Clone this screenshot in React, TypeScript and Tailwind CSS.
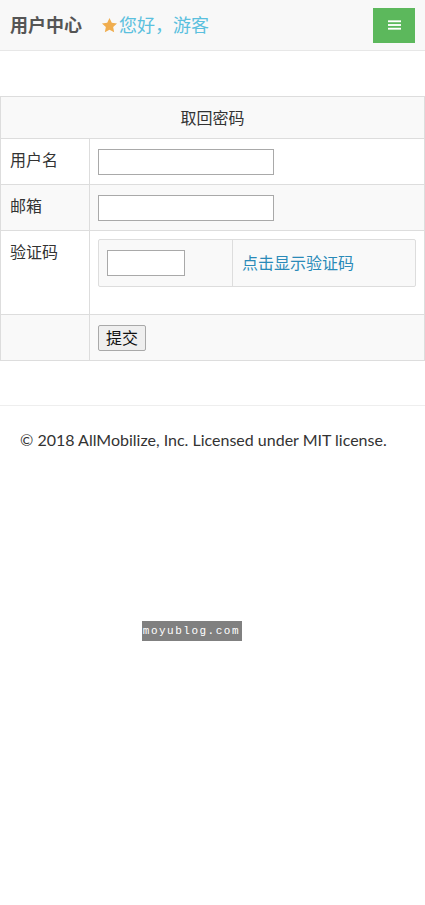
import React from "react";

const font = { fontFamily: '"Noto Sans", "Noto Sans CJK SC", sans-serif' };

function Header() {
    return (
        <div className="flex items-center h-[51px] bg-[#f8f8f8] border-b border-[#e7e7e7] pl-[10px] pr-[10px]">
            <span className="text-[18px] font-bold text-[#555]">用户中心</span>
            <span className="ml-[18px] flex items-center text-[18px] text-[#5bc0de]">
                <svg viewBox="0 0 24 24" className="w-[19px] h-[19px] fill-[#f0ad4e]">
                    <path d="M12 2.5l2.9 6.1 6.6.8-4.9 4.6 1.3 6.6L12 17.3l-5.9 3.3 1.3-6.6-4.9-4.6 6.6-.8z" />
                </svg>
                您好，游客
            </span>
            <button className="ml-auto w-[42px] h-[35px] bg-[#5cb85c] flex items-center justify-center">
                <svg viewBox="0 0 14 12" className="w-[13px] h-[12px] fill-white">
                    <rect x="0" y="1" width="14" height="2" />
                    <rect x="0" y="5" width="14" height="2" />
                    <rect x="0" y="9" width="14" height="2" />
                </svg>
            </button>
        </div>
    );
}

function Row({ label, bg, h, children }: { label: string; bg: string; h: string; children: React.ReactNode }) {
    return (
        <div className={`flex border-t border-[#ddd] ${bg} ${h}`}>
            <div className="w-[89px] shrink-0 border-r border-[#ddd] pl-[9px] pt-[9px] text-[16px] text-[#333]">{label}</div>
            <div className="flex-1 pl-[8px] pr-[8px] pt-[10px]">{children}</div>
        </div>
    );
}

export default function App() {
    return (
        <div className="bg-white min-h-[905px] text-[#333]" style={font}>
            <Header />
            <div className="mt-[45px] border border-[#ddd]">
                <div className="h-[41px] bg-[#f9f9f9] flex items-center justify-center text-[16px]">取回密码</div>
                <Row label="用户名" bg="bg-white" h="h-[46px]">
                    <input className="block w-[176px] h-[26px] border border-[#a9a9a9] bg-white" />
                </Row>
                <Row label="邮箱" bg="bg-[#f9f9f9]" h="h-[46px]">
                    <input className="block w-[176px] h-[26px] border border-[#a9a9a9] bg-white" />
                </Row>
                <Row label="验证码" bg="bg-white" h="h-[84px]">
                    <div className="-mt-[2px] flex h-[48px] border border-[#ddd] rounded-[2px] bg-[#f9f9f9]">
                        <div className="w-[134px] border-r border-[#ddd] flex items-center pl-[8px]">
                            <input className="block w-[78px] h-[26px] border border-[#a9a9a9] bg-white" />
                        </div>
                        <div className="flex items-center pl-[9px] text-[16px] text-[#2a8ab8]">点击显示验证码</div>
                    </div>
                </Row>
                <Row label="" bg="bg-[#f9f9f9]" h="h-[46px]">
                    <button className="block h-[26px] px-[7px] border border-[#a9a9a9] rounded-[2px] bg-[#efefef] text-[16px] leading-none text-[#111]">提交</button>
                </Row>
            </div>
            <div className="mt-[44px] border-t border-[#eee] pt-[22px] px-[20px] text-[16px] text-[#333] whitespace-nowrap" style={{ fontFamily: 'Lato, "Noto Sans", sans-serif' }}>
                © 2018 AllMobilize, Inc. Licensed under MIT license.
            </div>
            <div className="mt-[169px] ml-[142px] w-[100px] h-[20px] bg-[#808080] flex items-center justify-end pr-[2px] text-white text-[11px] tracking-[1.5px]" style={{ fontFamily: '"Liberation Mono", monospace' }}>
                moyublog.com
            </div>
        </div>
    );
}
